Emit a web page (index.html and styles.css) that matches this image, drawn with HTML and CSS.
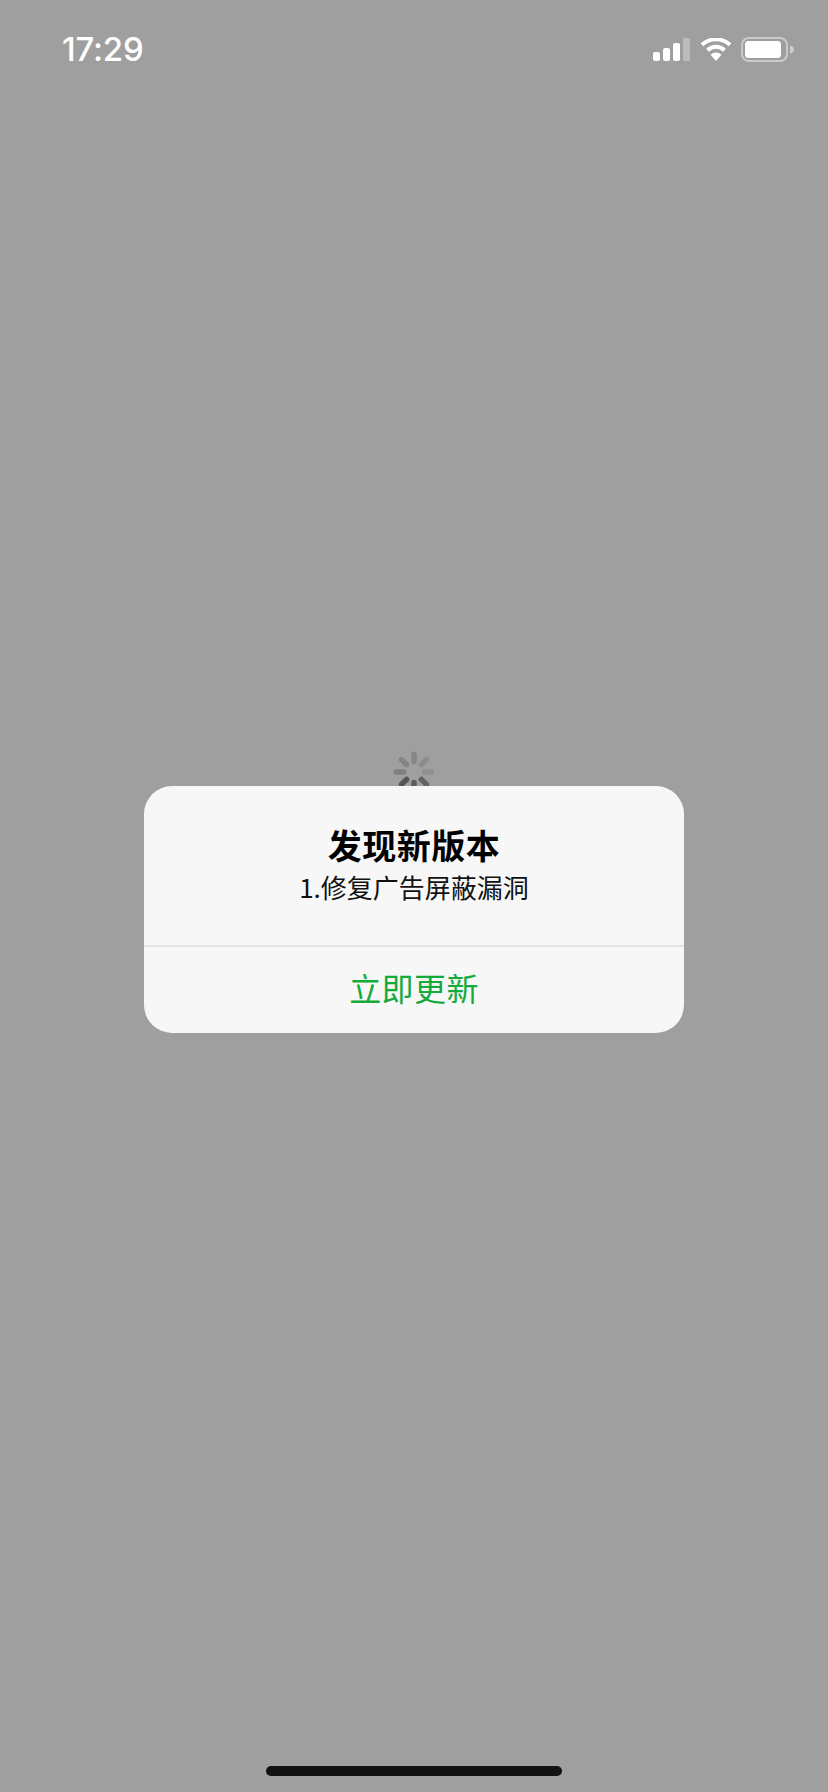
FILE: index.html
```html
<!DOCTYPE html>
<html lang="zh">
<head>
<meta charset="utf-8">
<title>发现新版本</title>
<link rel="stylesheet" href="styles.css">
</head>
<body>
<div class="screen">
  <header class="status">
    <span class="time">17:29</span>
    <div class="icons">
      <svg class="signal" width="37" height="23" viewBox="0 0 37 23"><rect x="0" y="14" width="7" height="9" rx="2" fill="#fff"/><rect x="10" y="10" width="7" height="13" rx="2" fill="#fff"/><rect x="20" y="5" width="7" height="18" rx="2" fill="#fff"/><rect x="30" y="0" width="7" height="23" rx="1.500" fill="#fff" fill-opacity=".3"/></svg>
      <svg class="wifi" width="32" height="23" viewBox="0 0 32 23"><path d="M16 23l-5.500-6.200a8 8 0 0 1 11 0z" fill="#fff"/><path d="M7.500 12.200a12.500 12.500 0 0 1 17 0" fill="none" stroke="#fff" stroke-width="4"/><path d="M2 6.800a20.500 20.500 0 0 1 28 0" fill="none" stroke="#fff" stroke-width="4"/></svg>
      <svg class="battery" width="53" height="25" viewBox="0 0 53 25"><rect x="1" y="1" width="45" height="23" rx="7" fill="none" stroke="#fff" stroke-opacity=".45" stroke-width="2"/><rect x="4" y="4" width="36" height="17" rx="3.500" fill="#fff"/><path d="M49 8.500c2.500.5 4 2 4 4s-1.500 3.500-4 4z" fill="#fff" fill-opacity=".5"/></svg>
    </div>
  </header>

  <svg class="spinner" width="42" height="42" viewBox="0 0 42 42">
    <g stroke-width="5.500" stroke-linecap="round" fill="none">
      <path d="M21 3.500v7" stroke="#858585"/>
      <path d="M33.400 8.600l-5 5" stroke="#8c8c8c"/>
      <path d="M38.500 21h-7" stroke="#909090"/>
      <path d="M33.400 33.400l-5-5" stroke="#646464"/>
      <path d="M21 38.500v-7" stroke="#5c5c5c"/>
      <path d="M8.600 33.400l5-5" stroke="#555"/>
      <path d="M3.500 21h7" stroke="#808080"/>
      <path d="M8.600 8.600l5 5" stroke="#848484"/>
    </g>
  </svg>

  <main class="center">
    <section class="dialog">
      <div class="body">
        <h1 class="title">发现新版本</h1>
        <p class="desc">1.修复广告屏蔽漏洞</p>
      </div>
      <button class="action">立即更新</button>
    </section>
  </main>

  <div class="home"></div>
</div>
</body>
</html>
```
FILE: styles.css
```css
* { box-sizing: border-box; }
html, body { margin: 0; padding: 0; }
body { font-family: "Noto Sans CJK SC", "Noto Sans", sans-serif; }
.screen {
  position: relative;
  width: 828px;
  height: 1792px;
  background: #9f9f9f;
  overflow: hidden;
  display: flex;
  flex-direction: column;
}
.status {
  height: 100px;
  display: flex;
  justify-content: space-between;
  align-items: flex-start;
  padding: 26px 34px 0 62px;
}
.time {
  font-family: Inter, "Liberation Sans", sans-serif;
  font-size: 33px;
  line-height: 46px;
  font-weight: 500;
  color: #fff;
  letter-spacing: -.2px;
}
.icons {
  display: flex;
  align-items: center;
  gap: 10px;
  padding-top: 11px;
}
.icons .battery { margin-left: -1px; }
.icons svg { display: block; }
.center {
  padding: 686px 144px 0;
}
.dialog {
  position: relative;
  width: 540px;
  height: 247px;
  background: #f7f7f7;
  border-radius: 28px;
  display: flex;
  flex-direction: column;
  text-align: center;
}
.body {
  height: 161px;
  padding-top: 38px;
  border-bottom: 2px solid #e2e2e2;
}
.title {
  margin: 0;
  font-size: 34px;
  line-height: 42px;
  font-weight: 700;
  letter-spacing: .5px;
  color: #000;
}
.desc {
  margin: 0;
  font-size: 26px;
  line-height: 42px;
  color: #111;
}
.action {
  flex: 1;
  border: 0;
  background: none;
  padding: 0 0 6px;
  font: inherit;
  font-size: 32px;
  letter-spacing: .4px;
  color: #13ab3b;
}
.spinner {
  position: absolute;
  left: 393px;
  top: 751px;
}
.home {
  position: absolute;
  left: 266px;
  bottom: 16px;
  width: 296px;
  height: 10px;
  border-radius: 5px;
  background: #121212;
}
```
